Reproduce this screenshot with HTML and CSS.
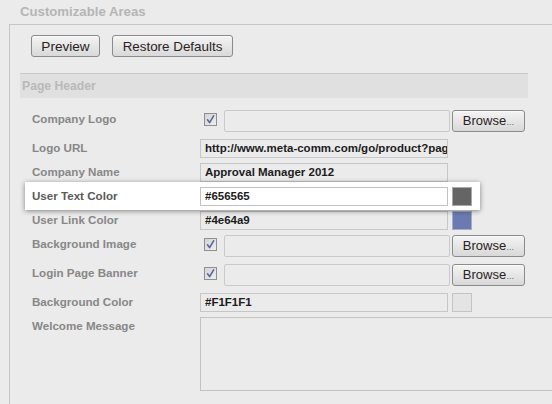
FILE: index.html
```html
<!DOCTYPE html>
<html>
<head>
<meta charset="utf-8">
<link rel="stylesheet" href="styles.css">
</head>
<body>
<div class="title">Customizable Areas</div>
<div class="panel">
  <div class="toolbar">
    <button class="btn btn-preview">Preview</button>
    <button class="btn btn-wide">Restore Defaults</button>
  </div>
  <div class="section-head">Page Header</div>
  <div class="rows">
    <div class="row file-row">
      <div class="lbl">Company Logo</div>
      <div class="field">
        <span class="chk"><svg width="13" height="13" viewBox="0 0 13 13"><path d="M3.5 6.8 L5.6 9.6 L9.6 2.8" fill="none" stroke="#5767a6" stroke-width="1.6" stroke-linecap="round" stroke-linejoin="round"/></svg></span>
        <span class="filebox"></span>
        <span class="browse">Browse<span class="ell">…</span></span>
      </div>
    </div>
    <div class="row text-row">
      <div class="lbl">Logo URL</div>
      <div class="field"><div class="input">http://www.meta-comm.com/go/product?page</div></div>
    </div>
    <div class="row text-row">
      <div class="lbl">Company Name</div>
      <div class="field"><div class="input">Approval Manager 2012</div></div>
    </div>
    <div class="row text-row hl">
      <div class="lbl">User Text Color</div>
      <div class="field"><div class="input input-white">#656565</div><span class="swatch sw-text"></span></div>
    </div>
    <div class="row text-row">
      <div class="lbl">User Link Color</div>
      <div class="field"><div class="input">#4e64a9</div><span class="swatch sw-link"></span></div>
    </div>
    <div class="row file-row">
      <div class="lbl">Background Image</div>
      <div class="field">
        <span class="chk"><svg width="13" height="13" viewBox="0 0 13 13"><path d="M3.5 6.8 L5.6 9.6 L9.6 2.8" fill="none" stroke="#5767a6" stroke-width="1.6" stroke-linecap="round" stroke-linejoin="round"/></svg></span>
        <span class="filebox"></span>
        <span class="browse">Browse<span class="ell">…</span></span>
      </div>
    </div>
    <div class="row file-row">
      <div class="lbl">Login Page Banner</div>
      <div class="field">
        <span class="chk"><svg width="13" height="13" viewBox="0 0 13 13"><path d="M3.5 6.8 L5.6 9.6 L9.6 2.8" fill="none" stroke="#5767a6" stroke-width="1.6" stroke-linecap="round" stroke-linejoin="round"/></svg></span>
        <span class="filebox"></span>
        <span class="browse">Browse<span class="ell">…</span></span>
      </div>
    </div>
    <div class="row text-row">
      <div class="lbl">Background Color</div>
      <div class="field"><div class="input">#F1F1F1</div><span class="swatch sw-bg"></span></div>
    </div>
    <div class="row text-row">
      <div class="lbl">Welcome Message</div>
      <div class="field"><div class="textarea"></div></div>
    </div>
  </div>
</div>
</body>
</html>
```
FILE: styles.css
```css
html, body {
  margin: 0;
  padding: 0;
  background: #ebebeb;
  overflow: hidden;
  width: 552px;
  height: 404px;
}
body {
  font-family: "Liberation Sans", Arial, sans-serif;
}
.title {
  height: 24px;
  line-height: 24px;
  padding-left: 20px;
  font-size: 13.2px;
  font-weight: bold;
  color: #b5b5b5;
}
.panel {
  margin-left: 9px;
  width: 620px;
  height: 400px;
  border-top: 1px solid #c6c6c6;
  border-left: 1px solid #c6c6c6;
  box-sizing: border-box;
}
.toolbar {
  display: flex;
  gap: 12px;
  padding: 10px 0 0 21px;
}
.btn {
  height: 22px;
  padding: 0;
  margin: 0;
  font-family: "Liberation Sans", Arial, sans-serif;
  font-size: 13.6px;
  color: #2a2222;
  border: 1px solid #8a8a8a;
  border-radius: 3px;
  background: linear-gradient(#f4f4f4, #e6e6e6 50%, #d9d9d9);
  box-shadow: inset 0 1px 0 #fbfbfb;
  text-align: center;
}
.btn-preview {
  width: 69px;
}
.btn-wide {
  width: 121px;
  font-size: 13.4px;
}
.section-head {
  margin: 16px 0 0 10px;
  width: 506px;
  height: 24px;
  line-height: 24px;
  border-top: 1px solid #c9c9c9;
  background: #e0e0e0;
  padding-left: 2px;
  box-sizing: content-box;
  font-size: 12.2px;
  font-weight: bold;
  color: #b9b9b9;
}
.rows {
  margin: 9px 0 0 15px;
}
.row {
  display: flex;
  align-items: flex-start;
  padding-left: 7px;
}
.text-row {
  padding-top: 3px;
  padding-bottom: 2px;
}
.file-row {
  padding-top: 3px;
  padding-bottom: 4px;
}
.hl {
  position: relative;
  z-index: 1;
  width: 455px;
  box-sizing: border-box;
  margin: -2px 0;
  padding-top: 5px;
  padding-bottom: 4px;
  background: #ffffff;
  box-shadow: 0 1px 5px rgba(0, 0, 0, 0.45);
}
.lbl {
  width: 168px;
  flex-shrink: 0;
  line-height: 18px;
  font-size: 11.6px;
  font-weight: bold;
  color: #878787;
}
.hl .lbl {
  color: #5a5a5a;
}
.field {
  display: flex;
  align-items: flex-start;
}
.input {
  width: 248px;
  height: 19px;
  box-sizing: border-box;
  border: 1px solid #c6c6c6;
  padding: 0 4px;
  line-height: 17px;
  font-size: 11.5px;
  font-weight: bold;
  color: #1c1c1c;
  white-space: nowrap;
  overflow: hidden;
  background: #ebebeb;
}
.input-white {
  background: #ffffff;
  border-color: #c2c2c2;
}
.swatch {
  margin-left: 4px;
  width: 20px;
  height: 19px;
  box-sizing: border-box;
  border: 1px solid #b4b4b4;
}
.sw-text {
  background: #656565;
  border-color: #a9a9a9;
}
.sw-link {
  background: #6b7bb1;
  border-color: #a6acc8;
}
.sw-bg {
  background: #e4e4e4;
  border-color: #c4c4c4;
}
.chk {
  display: block;
  margin: 3px 0 0 4px;
  width: 13px;
  height: 13px;
  box-sizing: border-box;
  border: 1px solid #8f8f8f;
  background: linear-gradient(135deg, #d4d4d4, #eeeeee);
  position: relative;
}
.chk svg {
  position: absolute;
  left: -1px;
  top: -1px;
}
.filebox {
  display: block;
  margin-left: 7px;
  width: 226px;
  height: 22px;
  box-sizing: border-box;
  border: 1px solid #cacaca;
  border-radius: 2px;
  background: #ebebeb;
}
.browse {
  display: block;
  margin-left: 2px;
  width: 73px;
  height: 22px;
  box-sizing: border-box;
  border: 1px solid #8b8b8b;
  border-radius: 3px;
  background: linear-gradient(#f4f4f4, #e6e6e6 50%, #d8d8d8);
  box-shadow: inset 0 1px 0 #fbfbfb;
  text-align: center;
  line-height: 20px;
  font-size: 13px;
  color: #2a2222;
}
.ell {
  font-size: 8px;
}
.textarea {
  width: 400px;
  height: 74px;
  box-sizing: border-box;
  border: 1px solid #c2c2c2;
  background: #ebebeb;
}
```
